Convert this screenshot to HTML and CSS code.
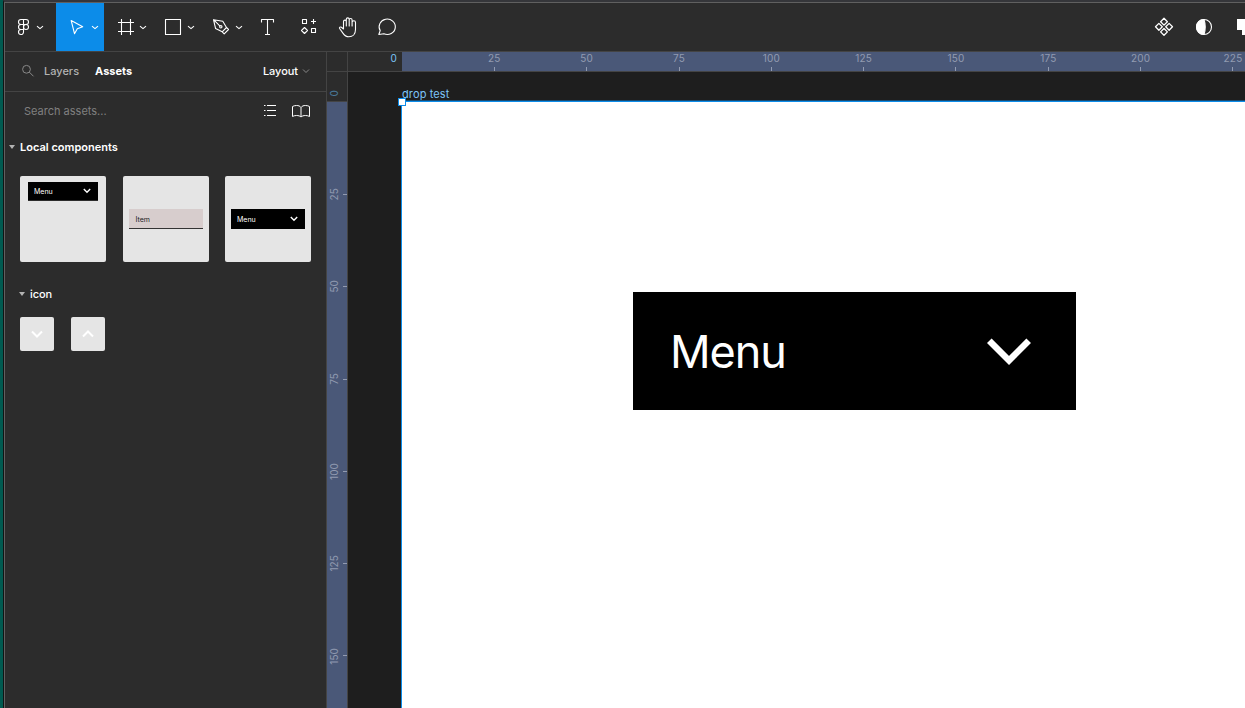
FILE: index.html
```html
<!DOCTYPE html>
<html lang="en">
<head>
<meta charset="utf-8">
<title>drop test</title>
<link rel="stylesheet" href="styles.css">
</head>
<body>
<div class="window">
  <header class="toolbar">
    <svg class="tool tool-logo" viewBox="5 3 51 48"><path d="M23.500 19.500H21a2.500 2.500 0 0 0 0 5h2.500zm0 0H26a2.500 2.500 0 0 1 0 5h-2.500zM23.500 24.500H21a2.500 2.500 0 0 0 0 5h2.500zM23.500 29.500H21a2.500 2.500 0 1 0 2.500 2.500z"/><circle cx="26" cy="27" r="2.500"/><path d="m37 26.200 3 2.500 3-2.500"/></svg>
    <svg class="tool tool-active" viewBox="56 3 48 48"><path d="m71.200 20.600 11.500 6.200-5.400 2-2.800 4.900z"/><path d="m92 26.200 3 2.500 3-2.500"/></svg>
    <svg class="tool" viewBox="104 3 48 48"><path d="M118 22.500h16M118 31.500h16M121.500 19v16M130.500 19v16"/><path d="m140 26.200 3 2.500 3-2.500"/></svg>
    <svg class="tool" viewBox="152 3 48 48"><path d="M165.500 19.500h15v15h-15z"/><path d="m188 26.200 3 2.500 3-2.500"/></svg>
    <svg class="tool" viewBox="200 3 48 48"><path d="m213.500 19.700 9.300 1.600 3.700 6.200-4.300 4.300-6.600-3.200zM213.500 19.700l6.500 6.500M222.200 31.800l2 2 4.300-4.300-2-2"/><circle cx="220.800" cy="26.800" r="1.200"/><path d="m236 26.200 3 2.500 3-2.500"/></svg>
    <svg class="tool tool-narrow" viewBox="248 3 40 48"><path d="M261.500 22.500v-3h12v3M267.500 19.500v15M265 34.500h5"/></svg>
    <svg class="tool tool-narrow" viewBox="288 3 40 48"><path d="M302.500 19.500h4v4h-4zM311.500 28.500h4v4h-4zM313.500 19v5M311 21.500h5M304.500 27.500l3 3-3 3-3-3z"/></svg>
    <svg class="tool tool-narrow" viewBox="328 3 40 48"><path d="M343.500 29v-7.500a1.400 1.400 0 0 1 2.800 0V26v-6.700a1.400 1.400 0 0 1 2.900 0V26v-6a1.400 1.400 0 0 1 2.900 0v6-3.500a1.700 1.700 0 0 1 3.400 0v7c0 4.500-2.800 7.300-6.600 7.300-3 0-4.600-1.500-6-3.700l-3.300-4.600c-.6-1.200.7-2 1.800-1.200z"/></svg>
    <svg class="tool tool-narrow" viewBox="368 3 40 48"><path d="M378.800 34.500 380.200 30.600a8.100 7.700 0 1 1 3.700 3.200z"/></svg>
    <svg class="tool tool-narrow tool-diamonds tool-right" viewBox="1144 3 40 48"><path d="m1164 18.300 3.400 3.400-3.400 3.400-3.400-3.400zM1164 28.500l3.400 3.400-3.400 3.400-3.400-3.400zM1158.900 23.400l3.400 3.400-3.400 3.400-3.400-3.400zM1169.100 23.400l3.400 3.400-3.400 3.400-3.400-3.400z"/></svg>
    <svg class="tool tool-narrow" viewBox="1184 3 40 48"><circle cx="1204" cy="27" r="7.500"/><path class="solid" d="M1204 19.500a7.500 7.500 0 0 0 0 15c1.500-4.500 1.500-10.500 0-15z"/></svg>
    <svg class="tool tool-cut" viewBox="1224 3 21 48"><path class="solid flat" d="M1237 19h8v16h-3v-5h-5z"/></svg>
  </header>
  <div class="workspace">
    <aside class="panel">
      <nav class="tabs">
        <svg class="search-icon" viewBox="0 0 14 14"><circle cx="5.500" cy="5.300" r="3.900"/><path d="m8.300 8.100 4.200 4.200"/></svg>
        <span class="tab">Layers</span>
        <span class="tab tab-active">Assets</span>
        <span class="page-name">Layout</span>
        <svg class="page-chevron" viewBox="0 0 8 6"><path d="m1 1.500 3 3 3-3"/></svg>
      </nav>
      <div class="search">
        <span class="placeholder">Search assets...</span>
        <svg class="list-icon" viewBox="0 0 14 14"><path d="M1 1.500h1.500M4 1.500h9M1 6.500h1.500M4 6.500h9M1 11.500h1.500M4 11.500h9"/></svg>
        <svg class="book-icon" viewBox="0 0 18 14"><path d="M9 3.500C8 2 6.500 1.500 4.500 1.500c-1.600 0-3 .4-4 1v10c1-.6 2.400-1 4-1 2 0 3.500.5 4.500 1.500 1-1 2.500-1.500 4.500-1.500 1.600 0 3 .4 4 1v-10c-1-.6-2.400-1-4-1-2 0-3.500.5-4.500 2zV13"/></svg>
      </div>
      <h2 class="section"><i class="caret"></i>Local components</h2>
      <div class="cards">
        <div class="card card-top"><div class="mini mini-small"><span>Menu</span><svg viewBox="0 0 8 6"><path d="m.8 1 3.200 3.200L7.200 1"/></svg></div></div>
        <div class="card"><div class="mini mini-item"><span>Item</span></div></div>
        <div class="card"><div class="mini"><span>Menu</span><svg viewBox="0 0 8 6"><path d="m.8 1 3.200 3.200L7.200 1"/></svg></div></div>
      </div>
      <h3 class="subsection"><i class="caret"></i>icon</h3>
      <div class="icons">
        <div class="icon-card"><svg viewBox="0 0 12 8"><path d="m1 1.500 5 5 5-5"/></svg></div>
        <div class="icon-card"><svg viewBox="0 0 12 8"><path d="m1 6.500 5-5 5 5"/></svg></div>
      </div>
    </aside>
    <div class="ruler-v">
      <div class="corner"></div>
      <div class="origin-v"><span>0</span></div>
      <div class="scale-v">
        <div class="mark-v"><span>25</span></div><div class="mark-v"><span>50</span></div><div class="mark-v"><span>75</span></div><div class="mark-v"><span>100</span></div><div class="mark-v"><span>125</span></div><div class="mark-v"><span>150</span></div>
      </div>
    </div>
    <main class="main">
      <div class="ruler-h">
        <div class="origin-h">0</div>
        <div class="scale-h">
          <div class="mark-h">25</div><div class="mark-h">50</div><div class="mark-h">75</div><div class="mark-h">100</div><div class="mark-h">125</div><div class="mark-h">150</div><div class="mark-h">175</div><div class="mark-h">200</div><div class="mark-h">225</div>
        </div>
      </div>
      <div class="canvas">
        <div class="frame-name">drop test</div>
        <div class="frame">
          <i class="handle"></i>
          <div class="menu"><span>Menu</span><svg viewBox="0 0 44 28"><path d="M2.300 2.800 22 22.500 41.700 2.800"/></svg></div>
        </div>
      </div>
    </main>
  </div>
</div>
</body>
</html>
```
FILE: styles.css
```css
* { box-sizing: border-box; }
body {
  margin: 0;
  height: 708px;
  overflow: hidden;
  background: #005a50;
  padding-left: 3px;
  font: 11px/16px Inter, "Liberation Sans", sans-serif;
  color: #fff;
}
svg { display: block; flex: none; fill: none; stroke: #fff; }
.window {
  height: 708px;
  display: flex;
  flex-direction: column;
  background: #2c2c2c;
  border-left: 1px solid #101414;
  border-top: 2px solid #35363a;
  box-shadow: inset 1px 1px #606060;
  padding: 1px 0 0 1px;
}
.toolbar {
  flex: none;
  display: flex;
  height: 49px;
  border-bottom: 1px solid #444;
}
.tool { width: 48px; height: 48px; stroke-width: 1.100; stroke-linejoin: round; }
.tool-logo { width: 51px; }
.tool-narrow { width: 40px; }
.tool-diamonds { stroke-width: 1.300; }
.tool-right { margin-left: auto; }
.tool-cut { width: 21px; }
.tool-active { background: #0c8ce9; }
.solid { fill: #fff; }
.flat { stroke: none; }

.workspace { flex: 1; min-height: 0; display: flex; }
.panel { flex: none; width: 322px; border-right: 1px solid #444; }
.tabs {
  height: 40px;
  display: flex;
  align-items: center;
  border-bottom: 1px solid #444;
  padding: 0 16px 2px;
  font-weight: 500;
}
.search-icon { width: 14px; height: 14px; stroke: #888; }
.tab { margin-left: 9px; color: #b3b3b3; }
.tab-active { margin-left: 16px; color: #fff; font-weight: 700; }
.page-name { margin-left: auto; letter-spacing: -.05px; }
.page-chevron { width: 8px; height: 6px; margin-left: 4px; stroke: #888; }
.search { height: 39px; display: flex; align-items: center; padding: 0 16px 2px 19px; }
.placeholder { flex: 1; color: #808080; letter-spacing: 0; }
.list-icon { width: 14px; height: 14px; margin-right: 15px; }
.book-icon { width: 18px; height: 14px; }
.section, .subsection { display: flex; align-items: center; margin: 0; font-size: 11px; }
.section { height: 32px; padding-left: 4px; font-weight: 600; }
.caret { border: 3px solid transparent; border-top: 4px solid #b3b3b3; border-bottom: 0; margin-right: 5px; }
.cards { display: flex; gap: 16.500px; padding: 13px 0 0 15px; }
.card {
  width: 86px;
  height: 86px;
  display: flex;
  align-items: center;
  justify-content: center;
  background: #e5e5e5;
  border-radius: 2px;
}
.card-top { align-items: flex-start; padding-top: 6px; }
.mini {
  width: 74px;
  height: 20px;
  display: flex;
  align-items: center;
  justify-content: space-between;
  padding: 0 7px 0 6px;
  background: #000;
  font-size: 7px;
  line-height: 8px;
}
.mini span { padding-top: 1px; }
.mini-small { height: 19px; width: 70px; border-bottom: 1px solid #2c2c2c; }
.mini-item { background: #d7cdcd; color: #222; border-bottom: 1px solid #333; padding-left: 7px; }
.mini-item span { padding-top: 2px; }
.mini svg { width: 8px; height: 6px; stroke-width: 1.400; }
.subsection { height: 32px; margin-top: 16px; padding-left: 14px; font-weight: 500; letter-spacing: -.1px; }
.icons { display: flex; gap: 17px; padding: 7px 0 0 15px; }
.icon-card {
  width: 34px;
  height: 34px;
  display: flex;
  align-items: center;
  justify-content: center;
  background: #e5e5e5;
  border-radius: 2px;
}
.icon-card svg { width: 12px; height: 8px; stroke-width: 2; }

.ruler-v {
  flex: none;
  width: 21px;
  display: flex;
  flex-direction: column;
  border-right: 1px solid #444;
  color: #929bb1;
  font-size: 10px;
}
.corner { flex: none; height: 20px; border-bottom: 1px solid #444; }
.origin-v {
  flex: none;
  height: 30px;
  display: flex;
  align-items: flex-end;
  padding-bottom: 5px;
  color: #4a7ea0;
  border-bottom: 1px solid #444;
}
.ruler-v span { writing-mode: vertical-rl; transform: rotate(180deg); line-height: 14px; letter-spacing: .1px; }
.scale-v { flex: 1; min-height: 0; overflow: hidden; background: #4a5878; padding-top: 46.200px; }
.mark-v { height: 92.330px; display: flex; align-items: center; justify-content: space-between; }
.mark-v::after { content: ""; width: 4px; height: 1px; background: #929bb1; }

.main { flex: 1; min-width: 0; display: flex; flex-direction: column; background: #1e1e1e; }
.ruler-h {
  flex: none;
  height: 20px;
  display: flex;
  border-bottom: 1px solid #444;
  font-size: 10px;
  line-height: 12px;
  letter-spacing: .2px;
}
.origin-h { flex: none; width: 54px; padding-right: 5px; text-align: right; background: #2c2c2c; color: #7cc4f8; }
.scale-h { flex: 1; min-width: 0; overflow: hidden; display: flex; background: #4a5878; padding-left: 46.200px; }
.mark-h { flex: none; width: 92.330px; height: 19px; display: flex; flex-direction: column; align-items: center; justify-content: space-between; color: #929bb1; }
.mark-h::after { content: ""; width: 1px; height: 4px; background: #929bb1; }
.canvas { flex: 1; min-height: 0; display: flex; flex-direction: column; padding: 14px 0 0 53px; }
.frame-name { height: 15px; padding-left: 1px; color: #7cc4f8; letter-spacing: .12px; }
.frame {
  flex: 1;
  position: relative;
  background: #fff;
  border: solid #0c8ce9;
  border-width: 1px 0 0 1px;
  box-shadow: 0 -1px #164a72;
  padding: 190px 0 0 231px;
}
.handle { position: absolute; left: -4px; top: -4px; width: 8px; height: 8px; background: #fff; border: 1px solid #0c8ce9; }
.menu {
  width: 443px;
  height: 118px;
  display: flex;
  align-items: center;
  justify-content: space-between;
  padding: 0 45px 0 37px;
  background: #000;
  font-size: 45px;
  line-height: 56px;
  letter-spacing: -1.100px;
}
.menu span { padding-top: 2px; }
.menu svg { width: 44px; height: 28px; margin-top: 1px; stroke-width: 6.500; }
```
